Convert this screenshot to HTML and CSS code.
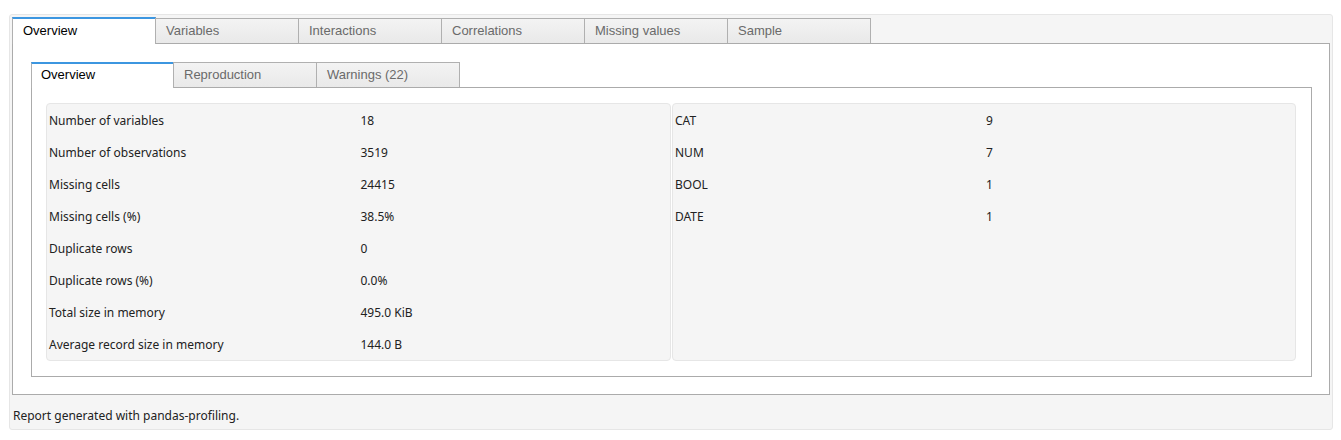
FILE: index.html
```html
<!DOCTYPE html>
<html>
<head>
<meta charset="utf-8">
<link rel="stylesheet" href="styles.css">
</head>
<body>
<div class="report">
  <div class="tabbar">
    <div class="tab active">Overview</div>
    <div class="tab">Variables</div>
    <div class="tab">Interactions</div>
    <div class="tab">Correlations</div>
    <div class="tab">Missing values</div>
    <div class="tab">Sample</div>
  </div>
  <div class="panel outer">
    <div class="tabbar inner-bar">
      <div class="tab active">Overview</div>
      <div class="tab">Reproduction</div>
      <div class="tab">Warnings (22)</div>
    </div>
    <div class="panel inner">
      <div class="tables">
        <div class="table">
          <div class="row"><span class="k">Number of variables</span><span class="v">18</span></div>
          <div class="row"><span class="k">Number of observations</span><span class="v">3519</span></div>
          <div class="row"><span class="k">Missing cells</span><span class="v">24415</span></div>
          <div class="row"><span class="k">Missing cells (%)</span><span class="v">38.5%</span></div>
          <div class="row"><span class="k">Duplicate rows</span><span class="v">0</span></div>
          <div class="row"><span class="k">Duplicate rows (%)</span><span class="v">0.0%</span></div>
          <div class="row"><span class="k">Total size in memory</span><span class="v">495.0 KiB</span></div>
          <div class="row"><span class="k">Average record size in memory</span><span class="v">144.0 B</span></div>
        </div>
        <div class="table">
          <div class="row"><span class="k">CAT</span><span class="v">9</span></div>
          <div class="row"><span class="k">NUM</span><span class="v">7</span></div>
          <div class="row"><span class="k">BOOL</span><span class="v">1</span></div>
          <div class="row"><span class="k">DATE</span><span class="v">1</span></div>
        </div>
      </div>
    </div>
  </div>
  <div class="footer">Report generated with pandas-profiling.</div>
</div>
</body>
</html>
```
FILE: styles.css
```css
html, body {
  margin: 0;
  padding: 0;
  background: #ffffff;
}
body {
  padding: 14px 8px 10px 9px;
  font-family: "Noto Sans", "Open Sans", sans-serif;
}
.report {
  background: #f5f5f5;
  border: 1px solid #e6e6e6;
  border-radius: 3px;
  padding: 2px 2px 0 2px;
}
.tabbar {
  display: flex;
  align-items: flex-start;
  height: 27px;
  position: relative;
  z-index: 1;
  margin-bottom: -1px;
}
.tab {
  box-sizing: border-box;
  width: 144px;
  height: 25px;
  margin-top: 1px;
  margin-right: -1px;
  border: 1px solid #b0b0b0;
  border-bottom: none;
  background: linear-gradient(#f3f3f3, #e9e9e9);
  font-family: "Liberation Sans", Arial, sans-serif;
  font-size: 13px;
  color: #6a6a6a;
  padding: 4px 0 0 10px;
  line-height: 16px;
}
.tab.active {
  margin-top: 0;
  height: 27px;
  background: #ffffff;
  color: #000000;
  border-top: 2px solid #3c96e0;
  padding-top: 4px;
}
.panel {
  background: #ffffff;
  border: 1px solid #ababab;
}
.outer {
  padding: 18px 17px 17px 18px;
}
.inner-bar {
  height: 26px;
}
.inner-bar .tab {
  margin-top: 0;
  height: 25px;
  padding-top: 4px;
}
.inner-bar .tab.active {
  width: 143px;
  height: 26px;
  padding-left: 9px;
  padding-top: 3px;
}
.inner {
  padding: 15px 15px 15px 14px;
}
.tables {
  display: grid;
  grid-template-columns: 625px 1fr;
  gap: 1px;
}
.table {
  background: #f5f5f5;
  border: 1px solid #e6e6e6;
  border-radius: 4px;
  height: 258px;
  box-sizing: border-box;
}
.row {
  display: grid;
  grid-template-columns: 50% 50%;
  height: 32px;
  align-items: center;
  font-size: 12px;
  color: #222222;
}
.k {
  padding-left: 2px;
}
.v {
  padding-left: 2px;
}
.footer {
  height: 30px;
  padding-top: 4px;
  line-height: 34px;
  font-size: 12px;
  color: #222222;
  padding-left: 1px;
}
```
